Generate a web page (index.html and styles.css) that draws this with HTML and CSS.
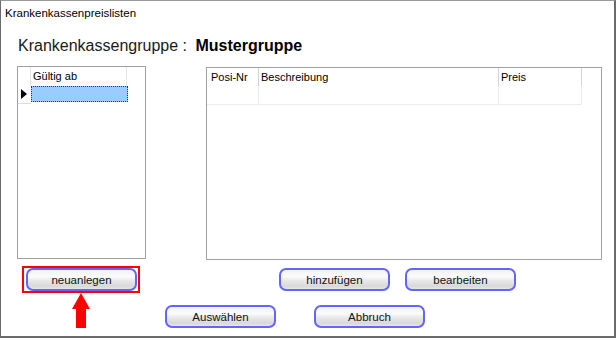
FILE: index.html
```html
<!DOCTYPE html>
<html lang="de">
<head>
    <meta charset="UTF-8">
    <title>Krankenkassenpreislisten</title>
    <link rel="stylesheet" href="styles.css">
</head>
<body>

    <div class="window">
        <div class="title">Krankenkassenpreislisten</div>

        <div class="heading">
            <span class="label">Krankenkassengruppe :</span>
            <span class="group">Mustergruppe</span>
        </div>

        <div class="panels">
            <div class="grid-box left-grid">
                <div class="lg-row lg-head">
                    <div class="lg-rowhead"></div>
                    <div class="lg-cell">Gültig ab</div>
                </div>
                <div class="lg-row lg-data">
                    <div class="lg-rowhead"><span class="pointer"></span></div>
                    <div class="lg-cell selected"></div>
                </div>
            </div>

            <div class="grid-box right-grid">
                <div class="rg-row rg-head">
                    <div class="rg-cell c-pos">Posi-Nr</div>
                    <div class="rg-cell c-desc">Beschreibung</div>
                    <div class="rg-cell c-price">Preis</div>
                </div>
                <div class="rg-row rg-empty">
                    <div class="rg-cell c-pos"></div>
                    <div class="rg-cell c-desc"></div>
                    <div class="rg-cell c-price"></div>
                </div>
            </div>
        </div>

        <div class="button-row row-one">
            <div class="highlight">
                <button class="btn">neuanlegen</button>
            </div>
            <button class="btn add">hinzufügen</button>
            <button class="btn">bearbeiten</button>
        </div>

        <div class="button-row row-two">
            <button class="btn">Auswählen</button>
            <button class="btn">Abbruch</button>
        </div>

        <!-- annotation arrow -->
        <svg class="arrow" width="18" height="35" viewBox="0 0 18 35">
            <polygon points="9,0 18,16 14,16 14,35 4,35 4,16 0,16" fill="#ff0000"/>
        </svg>
    </div>

</body>
</html>
```

FILE: styles.css
```css
body {
    margin: 0;
    padding: 0;
    background-color: #fff;
    font-family: "Liberation Sans", Arial, sans-serif;
}

.window {
    position: relative;
    width: 616px;
    height: 338px;
    box-sizing: border-box;
    border-top: 1px solid #9a9a9a;
    border-left: 1px solid #6a6a6a;
    border-right: 2px solid #6a6a6a;
    border-bottom: 2px solid #6a6a6a;
    background-color: #fff;
    overflow: hidden;
}

.title {
    margin-top: 4px;
    padding-left: 4px;
    height: 16px;
    line-height: 16px;
    font-size: 11.5px;
    color: #000;
}

.heading {
    margin-top: 15px;
    padding-left: 17px;
    height: 20px;
    line-height: 20px;
    font-size: 16px;
    color: #1a1a1a;
}

.heading .group {
    font-weight: bold;
    margin-left: 4px;
    color: #000;
}

.panels {
    display: flex;
    align-items: flex-start;
    margin-top: 10px;
    padding-left: 16px;
    height: 194px;
}

.grid-box {
    box-sizing: border-box;
    border: 1px solid #a0a0a0;
    background-color: #fff;
    height: 193px;
    font-size: 11px;
    color: #000;
}

.left-grid {
    width: 129px;
}

.right-grid {
    width: 396px;
    margin-left: 60px;
    margin-top: 1px;
}

/* left grid */
.lg-row {
    display: flex;
}

.lg-head {
    height: 19px;
    line-height: 19px;
}

.lg-data {
    height: 17px;
}

.lg-rowhead {
    width: 12px;
    border-right: 1px solid #e6e6e6;
    position: relative;
}

.lg-data .lg-rowhead {
    border-right: none;
    width: 13px;
    border-bottom: 1px solid #dcdcdc;
    height: 17px;
}

.lg-cell {
    width: 96px;
    padding-left: 2px;
    box-sizing: border-box;
    border-right: 1px solid #e6e6e6;
}

.lg-cell.selected {
    width: 97px;
    height: 16px;
    border: 1px dotted #4a3020;
    background-color: #99ccff;
}

.pointer {
    position: absolute;
    left: 3px;
    top: 3px;
    width: 0;
    height: 0;
    border-top: 5px solid transparent;
    border-bottom: 5px solid transparent;
    border-left: 6px solid #000;
}

/* right grid */
.rg-row {
    display: flex;
    width: 375px;
}

.rg-head {
    height: 18px;
    line-height: 18px;
}

.rg-empty {
    height: 18px;
    border-bottom: 1px solid #ececec;
}

.rg-cell {
    box-sizing: border-box;
    padding-left: 2px;
}

.rg-head .rg-cell {
    border-right: 1px solid #d4d4d4;
}

.rg-empty .rg-cell {
    border-right: 1px solid #ececec;
}

.c-pos {
    width: 52px;
    padding-left: 4px;
}

.c-desc {
    width: 240px;
}

.c-price {
    width: 83px;
}

/* buttons */
.button-row {
    display: flex;
    align-items: flex-start;
}

.row-one {
    margin-top: 6px;
    padding-left: 21px;
}

.row-two {
    margin-top: 12px;
    padding-left: 164px;
}

.highlight {
    border: 2px solid #ff0000;
    padding: 0 1px 0 2px;
    height: 23px;
}

.btn {
    width: 111px;
    height: 23px;
    box-sizing: border-box;
    border: 2px solid #6464ff;
    border-radius: 7px;
    background: linear-gradient(#f2f2f2, #fbfbfb 35%, #e9e9e9 55%, #d9d9d9 85%, #e6e6e6);
    font-family: "Liberation Sans", Arial, sans-serif;
    font-size: 11.5px;
    color: #111;
    padding: 0;
    cursor: pointer;
}

.row-one .add {
    margin-left: 139px;
    margin-top: 2px;
}

.row-one .add + .btn {
    margin-left: 15px;
    margin-top: 2px;
}

.row-two .btn + .btn {
    margin-left: 38px;
}

.arrow {
    position: absolute;
    left: 71px;
    top: 292px;
}
```
